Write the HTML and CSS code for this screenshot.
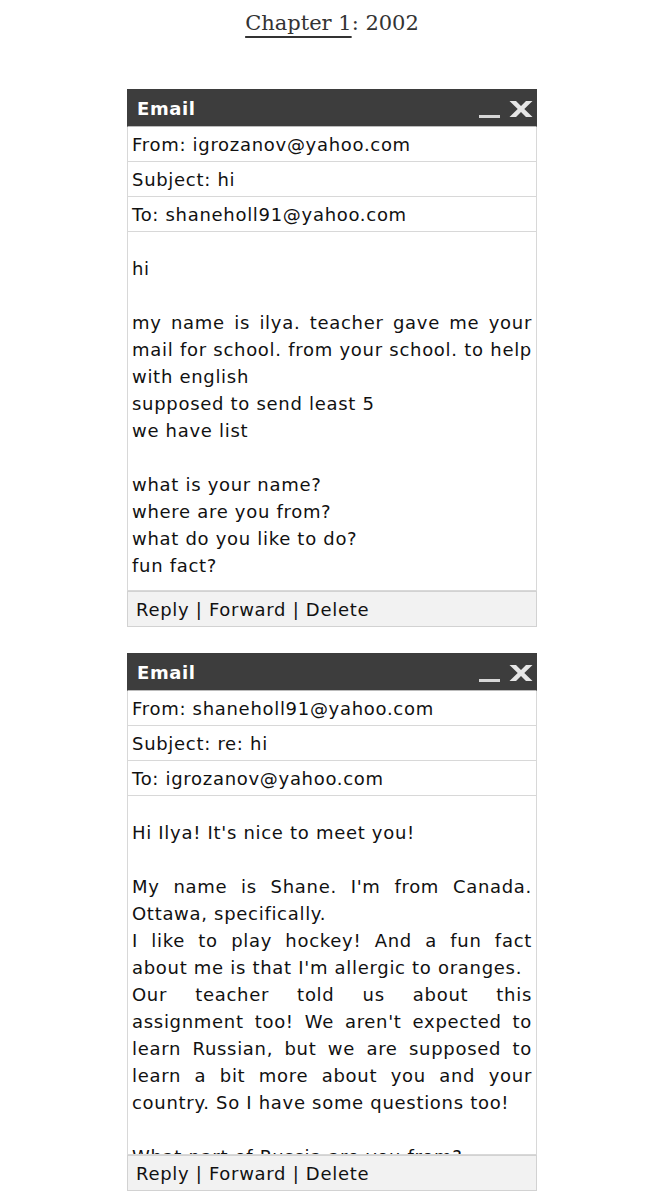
FILE: index.html
```html
<!DOCTYPE html>
<html>
<head>
<meta charset="utf-8">
<link rel="stylesheet" href="styles.css">
</head>
<body>
<h1 class="chapter"><a class="chapter-link" href="#">Chapter 1</a>: 2002</h1>

<div class="email">
  <div class="titlebar">
    <span class="title">Email</span>
    <span class="controls">
      <span class="min"></span>
      <svg class="close" width="24" height="16" viewBox="0 0 24 16"><path d="M0.5 0 H7 L12 5 L17 0 H23.5 L15.3 8 L23.5 16 H17 L12 11 L7 16 H0.5 L8.7 8 Z" fill="#e6e6e6"/></svg>
    </span>
  </div>
  <div class="row">From: igrozanov@yahoo.com</div>
  <div class="row">Subject: hi</div>
  <div class="row">To: shaneholl91@yahoo.com</div>
  <div class="body">
    <p>hi<br><br>my name is ilya. teacher gave me your mail for school. from your school. to help with english<br>supposed to send least 5<br>we have list<br><br>what is your name?<br>where are you from?<br>what do you like to do?<br>fun fact?</p>
  </div>
  <div class="footer">Reply | Forward | Delete</div>
</div>

<div class="email">
  <div class="titlebar">
    <span class="title">Email</span>
    <span class="controls">
      <span class="min"></span>
      <svg class="close" width="24" height="16" viewBox="0 0 24 16"><path d="M0.5 0 H7 L12 5 L17 0 H23.5 L15.3 8 L23.5 16 H17 L12 11 L7 16 H0.5 L8.7 8 Z" fill="#e6e6e6"/></svg>
    </span>
  </div>
  <div class="row">From: shaneholl91@yahoo.com</div>
  <div class="row">Subject: re: hi</div>
  <div class="row">To: igrozanov@yahoo.com</div>
  <div class="body">
    <p>Hi Ilya! It's nice to meet you!<br><br>My name is Shane. I'm from Canada. Ottawa, specifically.<br>I like to play hockey! And a fun fact about me is that I'm allergic to oranges.<br>Our teacher told us about this assignment too! We aren't expected to learn Russian, but we are supposed to learn a bit more about you and your country. So I have some questions too!<br><br>What part of Russia are you from?<br>What do you like to do?</p>
  </div>
  <div class="footer">Reply | Forward | Delete</div>
</div>
</body>
</html>
```

FILE: styles.css
```css
html, body {
  margin: 0;
  padding: 0;
  background: #ffffff;
}

body {
  font-family: "DejaVu Sans", Verdana, sans-serif;
  color: #111;
  padding-top: 8px;
}

.chapter {
  margin: 0 0 51px 0;
  text-align: center;
  font-family: "DejaVu Serif", Georgia, serif;
  font-weight: normal;
  font-size: 21px;
  line-height: 30px;
  color: #333;
}

.chapter-link {
  color: #333;
  text-decoration: underline;
  text-decoration-thickness: 2px;
  text-underline-offset: 6px;
}

.email {
  width: 410px;
  margin: 0 auto 26px auto;
  font-size: 18px;
  letter-spacing: 0.7px;
}

.titlebar {
  background: #3d3d3d;
  height: 36px;
  display: flex;
  align-items: center;
  justify-content: space-between;
  padding: 0 3px 0 9px;
  border: 1px solid #3d3d3d;
  border-bottom: 1px solid #bbb;
}

.title {
  color: #ffffff;
  font-weight: bold;
  font-size: 18px;
  letter-spacing: 0.6px;
}

.controls {
  display: flex;
  align-items: flex-end;
  gap: 9px;
  height: 18px;
}

.min {
  display: block;
  width: 21px;
  height: 3px;
  background: #d6d6d6;
  margin-bottom: -1px;
}

.close {
  display: block;
}

.row {
  border: 1px solid #d8d8d8;
  border-top: none;
  height: 34px;
  line-height: 36px;
  padding: 0 4px;
  white-space: nowrap;
}

.body {
  border: 1px solid #d8d8d8;
  border-top: none;
  height: 359px;
  overflow: hidden;
  padding: 23px 4px 0 4px;
  box-sizing: border-box;
}

.body p {
  margin: 0;
  line-height: 27px;
  text-align: justify;
}

.footer {
  background: #f2f2f2;
  border: 1px solid #d2d2d2;
  height: 34px;
  line-height: 36px;
  padding: 0 8px;
}
```
